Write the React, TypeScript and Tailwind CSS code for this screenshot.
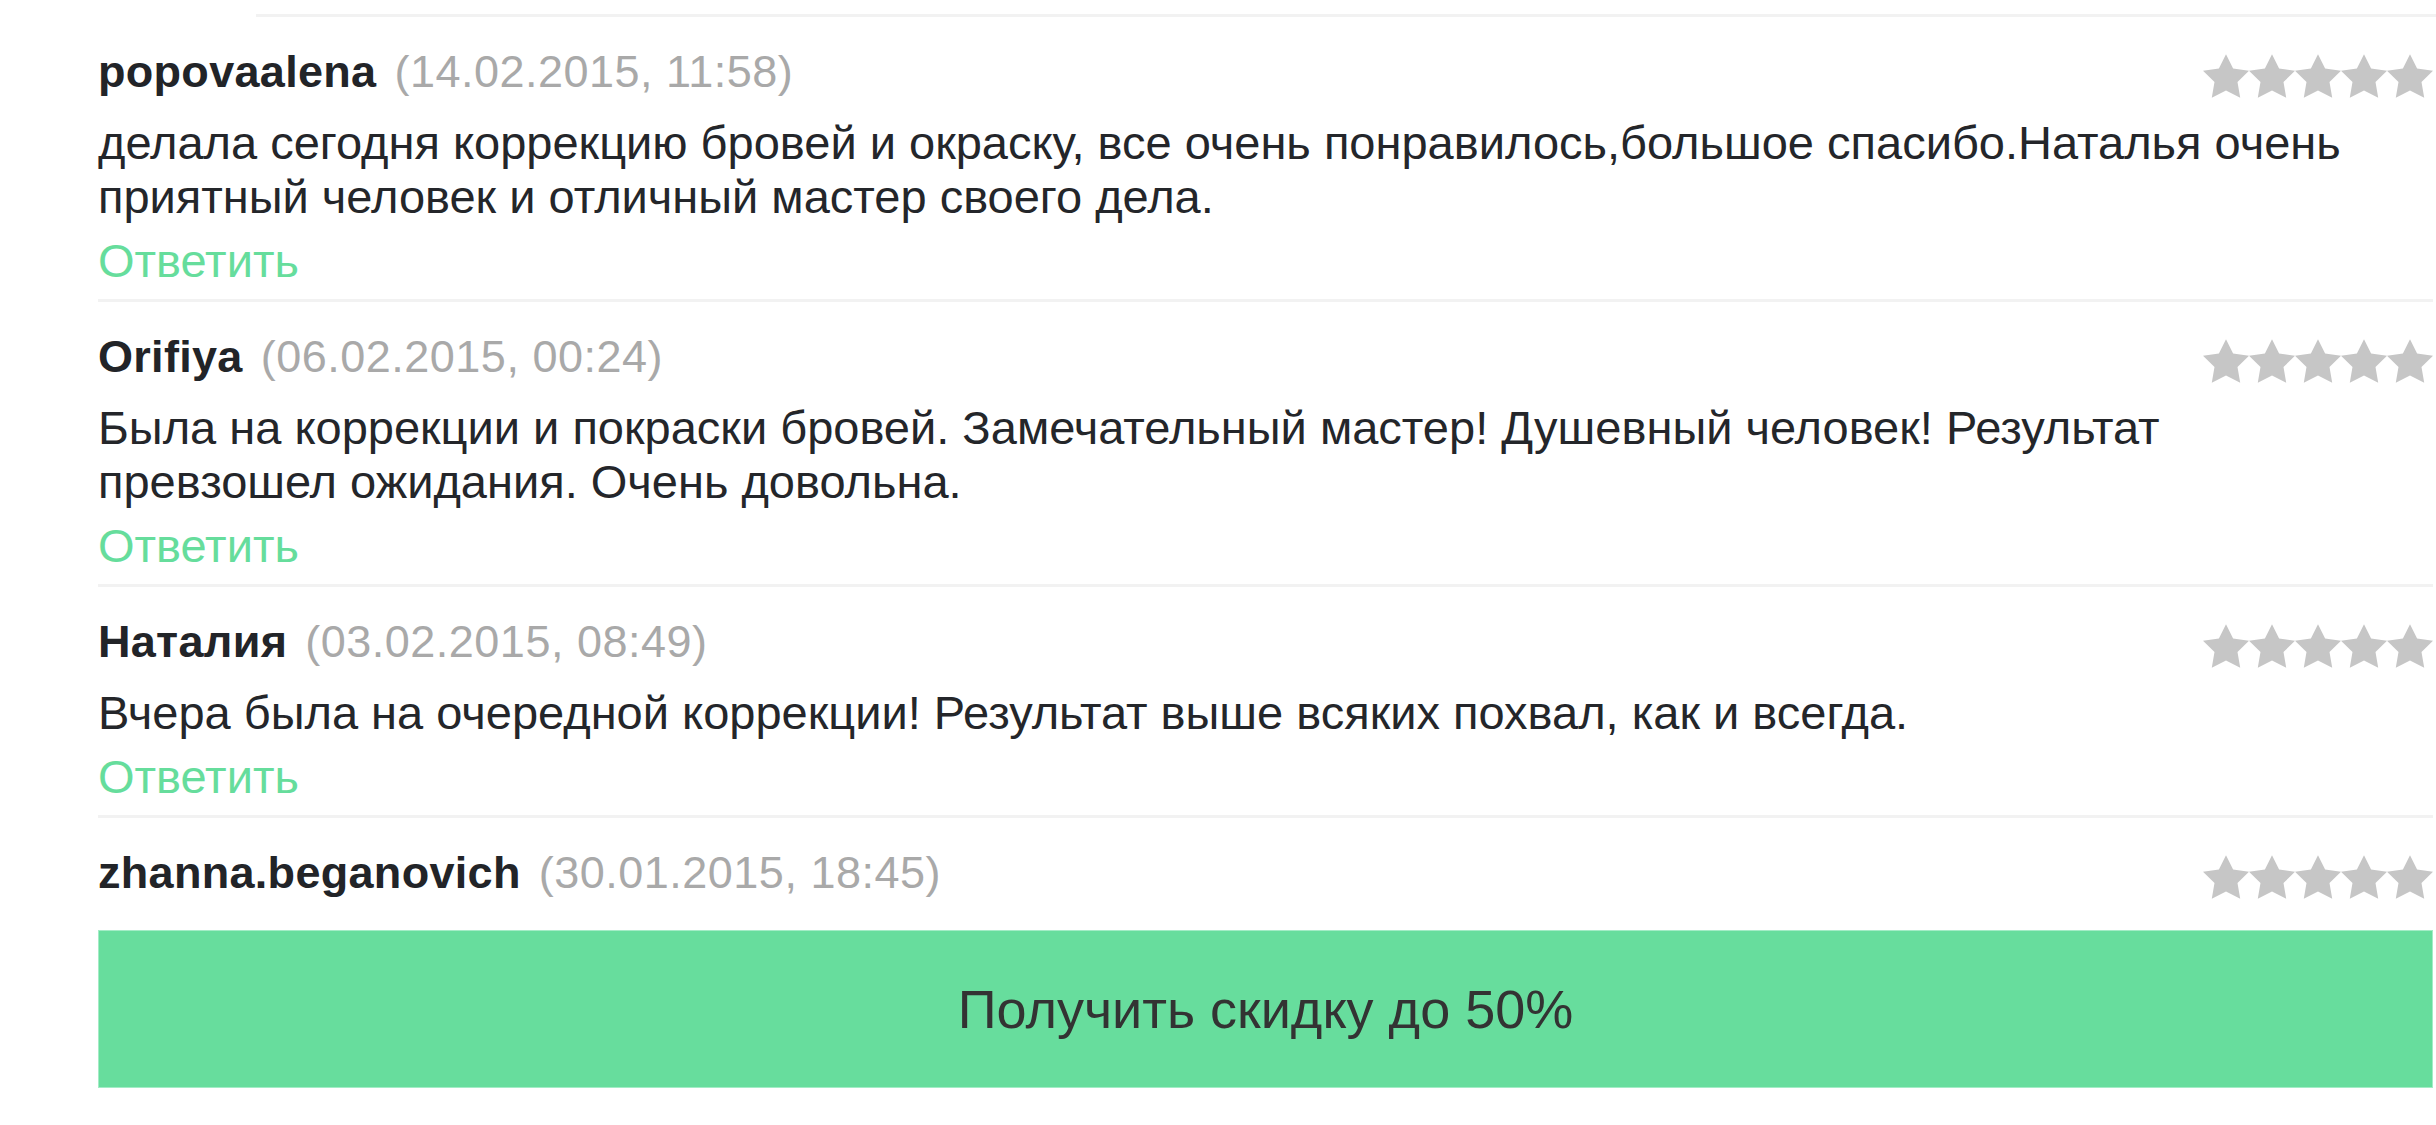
import React from 'react';

type Review = {
  name: string;
  date: string;
  text?: string;
  reply?: boolean;
};

const reviews: Review[] = [
  {
    name: 'popovaalena',
    date: '(14.02.2015, 11:58)',
    text: 'делала сегодня коррекцию бровей и окраску, все очень понравилось,большое спасибо.Наталья очень приятный человек и отличный мастер своего дела.',
    reply: true,
  },
  {
    name: 'Orifiya',
    date: '(06.02.2015, 00:24)',
    text: 'Была на коррекции и покраски бровей. Замечательный мастер! Душевный человек! Результат превзошел ожидания. Очень довольна.',
    reply: true,
  },
  {
    name: 'Наталия',
    date: '(03.02.2015, 08:49)',
    text: 'Вчера была на очередной коррекции! Результат выше всяких похвал, как и всегда.',
    reply: true,
  },
  {
    name: 'zhanna.beganovich',
    date: '(30.01.2015, 18:45)',
  },
];

function Stars() {
  return (
    <div className="flex shrink-0 mt-[8px]">
      {[0, 1, 2, 3, 4].map((i) => (
        <svg key={i} width="46" height="44" viewBox="2 2 20 19.02" className="block">
          <polygon
            fill="#c6c6c6"
            points="12,2 15.09,8.26 22,9.27 17,14.14 18.18,21.02 12,17.77 5.82,21.02 7,14.14 2,9.27 8.91,8.26"
          />
        </svg>
      ))}
    </div>
  );
}

function ReviewItem({ r, last }: { r: Review; last: boolean }) {
  return (
    <div className={last ? 'pt-[28px]' : 'pt-[28px] pb-[11px] border-b-[3px] border-[#f2f2f2]'}>
      <div className="flex items-center justify-between h-[54px]">
        <div className="whitespace-nowrap">
          <span className="font-bold text-[#222428] tracking-[0.3px]">{r.name}</span>
          <span className="ml-[18px] text-[#a9a9a9] tracking-[0.5px]">{r.date}</span>
        </div>
        <Stars />
      </div>
      {r.text && (
        <p className="mt-[17px] w-[2275px] text-[47px] text-[#24262a]">{r.text}</p>
      )}
      {r.reply && <div className="mt-[10px] text-[47px] text-[#66dd9c]">Ответить</div>}
    </div>
  );
}

export default function App() {
  return (
    <div
      className="w-[2436px] h-[1125px] bg-white overflow-hidden text-[45px] leading-[54px]"
      style={{ fontFamily: '"Liberation Sans", Arial, sans-serif' }}
    >
      <div className="pt-[14px]">
        <div className="ml-[256px] h-[3px] bg-[#f2f2f2]" />
      </div>
      <div className="pl-[98px] pr-[3px]">
        {reviews.map((r, i) => (
          <ReviewItem key={i} r={r} last={i === reviews.length - 1} />
        ))}
        <button className="mt-[30px] w-full h-[158px] bg-[#67dd9d] border border-[#a3ecc6] text-[#333333] text-[54px] flex items-center justify-center">
          Получить скидку до 50%
        </button>
      </div>
    </div>
  );
}
